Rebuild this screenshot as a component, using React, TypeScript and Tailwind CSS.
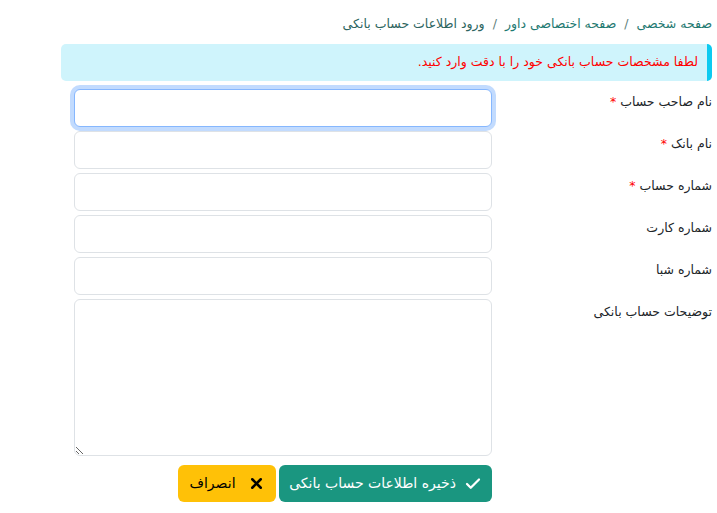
import React from 'react';
import { Check, X } from 'lucide-react';

const fields = [
  { label: 'نام صاحب حساب', required: true },
  { label: 'نام بانک', required: true },
  { label: 'شماره حساب', required: true },
  { label: 'شماره کارت', required: false },
  { label: 'شماره شبا', required: false },
];

const App: React.FC = () => {
  return (
    <div
      dir="rtl"
      className="min-h-screen bg-white pr-[5px] text-[12.5px] text-[#212529]"
      style={{ fontFamily: '"DejaVu Sans", "Noto Sans", sans-serif' }}
    >
      {/* Breadcrumb */}
      <nav className="flex h-[44px] items-center gap-2 pt-[5px] text-[#1f7a72]">
        <span>صفحه شخصی</span>
        <span className="text-[#5f7f7b]">/</span>
        <span>صفحه اختصاصی داور</span>
        <span className="text-[#5f7f7b]">/</span>
        <span className="text-[#2d6560]">ورود اطلاعات حساب بانکی</span>
      </nav>

      {/* Alert */}
      <div className="flex h-[37px] w-[651px] items-center rounded-[5px] border-r-[5px] border-[#0dcaf0] bg-[#cff4fc] pr-[9px] text-[#ff0000]">
        لطفا مشخصات حساب بانکی خود را با دقت وارد کنید.
      </div>

      {/* Form */}
      <div className="mt-[8px] flex flex-col gap-[4px]">
        {fields.map((f, i) => (
          <div key={f.label} className="flex">
            <label className="w-[220px] leading-[26px]">
              {f.label}
              {f.required && <span className="mr-1 text-[#ff0000]">*</span>}
            </label>
            <input
              autoFocus={i === 0}
              className={
                'h-[38px] w-[418px] rounded-[6px] border bg-white px-3 outline-none ' +
                (i === 0
                  ? 'border-[#86b7fe] shadow-[0_0_0_4px_rgba(13,110,253,0.25)]'
                  : 'border-[#dee2e6]')
              }
            />
          </div>
        ))}
        <div className="flex">
          <label className="w-[220px] leading-[26px]">توضیحات حساب بانکی</label>
          <textarea className="h-[157px] w-[418px] rounded-[6px] border border-[#dee2e6] bg-white px-3 py-2 outline-none" />
        </div>
      </div>

      {/* Buttons */}
      <div className="mt-[9px] flex gap-[3px] pr-[220px]">
        <button className="flex h-[37px] w-[213px] items-center justify-center gap-2 rounded-[6px] bg-[#1a9680] text-[14px] text-white">
          <Check className="h-[18px] w-[18px]" strokeWidth={3} />
          ذخیره اطلاعات حساب بانکی
        </button>
        <button className="flex h-[37px] w-[98px] items-center justify-center gap-3 rounded-[6px] bg-[#ffc107] text-[14px] text-black">
          <X className="h-[17px] w-[17px]" strokeWidth={3.5} />
          انصراف
        </button>
      </div>
    </div>
  );
};

export default App;
